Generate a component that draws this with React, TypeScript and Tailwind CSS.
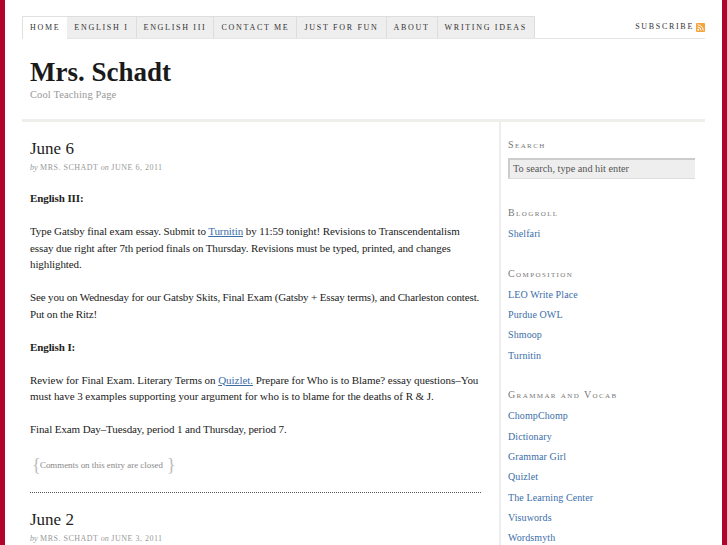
const tabs = ["Home", "English I", "English III", "Contact Me", "Just for Fun", "About", "Writing Ideas"];

function Tabs() {
  return (
    <ul className="flex h-[23px] border-b border-[#e5e5e5]">
      {tabs.map((t, i) => (
        <li
          key={t}
          className={
            i === 0
              ? "h-[23px] border-l border-t border-[#e0e0e0] bg-white px-[7px] pt-[5px] text-[8px] leading-[12px] tracking-[1.7px] text-[#333] uppercase"
              : "h-[22px] border-t border-r border-[#dddddd] bg-[#eeeeee] px-[7px] pt-[5px] text-[8px] leading-[12px] tracking-[1.7px] text-[#333] uppercase"
          }
        >
          {t}
        </li>
      ))}
    </ul>
  );
}

function Meta({ date }: { date: string }) {
  return (
    <p className="mt-[3px] text-[8px] leading-[12px] text-[#999] uppercase tracking-[0.5px]">
      <em className="normal-case tracking-normal">by</em> Mrs. Schadt <em className="normal-case tracking-normal">on</em> {date}
    </p>
  );
}

function Widget({ title, links }: { title: string; links: string[] }) {
  return (
    <div className="mb-[22.5px]">
      <h3 className="text-[10px] leading-[14px] tracking-[1.4px] text-[#777] [font-variant:small-caps]">{title}</h3>
      <ul className="mt-[4px]">
        {links.map((l) => (
          <li key={l} className="text-[10px] leading-[20.3px] tracking-[0.1px] text-[#3b6ea8]">{l}</li>
        ))}
      </ul>
    </div>
  );
}

export default function App() {
  return (
    <div className="h-[545px] overflow-hidden border-x-[5px] border-[#b0042c] bg-white px-[17px] pt-4 font-['Liberation_Serif',serif]">
      <div className="relative">
        <Tabs />
        <div className="absolute right-0 top-[5px] flex items-center gap-[2px] text-[8px] leading-[12px] tracking-[1.7px] text-[#333]">
          SUBSCRIBE
          <svg width="9" height="9" viewBox="0 0 9 9">
            <rect width="9" height="9" rx="1" fill="#f7a33b" />
            <circle cx="2.2" cy="6.8" r="1" fill="#fff" />
            <path d="M1.5 4a3.5 3.5 0 0 1 3.5 3.5M1.5 1.8A5.7 5.7 0 0 1 7.2 7.5" fill="none" stroke="#fff" />
          </svg>
        </div>
      </div>
      <header className="h-[83px] border-b-[3px] border-[#eeeeea] pl-2 pt-[15px]">
        <h1 className="text-[27px] font-bold leading-[36px] text-[#1a1a1a]">Mrs. Schadt</h1>
        <p className="-mt-[2px] text-[10.5px] leading-[14px] tracking-[0.12px] text-[#999]">Cool Teaching Page</p>
      </header>
      <div className="flex">
        <main className="w-[479px] border-r-2 border-[#eeeeee] pl-2 pr-[18px] pt-[17px]">
          <h2 className="text-[17px] leading-[20px] text-[#222]">June 6</h2>
          <Meta date="June 6, 2011" />
          <div className="mt-[16px] text-[11px] leading-[16.5px] tracking-[-0.1px] text-[#222]">
            <p className="font-bold">English III:</p>
            <p className="mt-[16.5px]">
              Type Gatsby final exam essay. Submit to <span className="text-[#3b6ea8] underline">Turnitin</span> by 11:59 tonight! Revisions to Transcendentalism essay due right after 7th period finals on Thursday. Revisions must be typed, printed, and changes highlighted.
            </p>
            <p className="mt-[16.5px] tracking-[-0.15px]">See you on Wednesday for our Gatsby Skits, Final Exam (Gatsby + Essay terms), and Charleston contest. Put on the Ritz!</p>
            <p className="mt-[16.5px] font-bold">English I:</p>
            <p className="mt-[16.5px] tracking-[-0.05px]">
              Review for Final Exam. Literary Terms on <span className="text-[#3b6ea8] underline">Quizlet.</span> Prepare for Who is to Blame? essay questions–You must have 3 examples supporting your argument for who is to blame for the deaths of R &amp; J.
            </p>
            <p className="mt-[16.5px]">Final Exam Day–Tuesday, period 1 and Thursday, period 7.</p>
          </div>
          <p className="mt-[15px] flex items-center pl-[2px] text-[8.9px] leading-[24px] text-[#888]">
            <span className="w-[8px] text-[18px] font-light text-[#bbb]">{"{"}</span>
            Comments on this entry are closed
            <span className="ml-[4px] text-[18px] font-light text-[#bbb]">{"}"}</span>
          </p>
          <div className="mt-[15px] border-t border-dotted border-[#555]" />
          <h2 className="mt-[17px] text-[17px] leading-[20px] text-[#222]">June 2</h2>
          <Meta date="June 3, 2011" />
        </main>
        <aside className="flex-1 pl-[7px] pr-[10px] pt-[16px]">
          <h3 className="text-[10px] leading-[14px] tracking-[1.4px] text-[#777] [font-variant:small-caps]">Search</h3>
          <div className="mb-[27px] mt-[6px] h-[21px] border-l-2 border-t-2 border-b border-l-[#cccccc] border-t-[#cccccc] border-b-[#dddddd] bg-[#eeeeee] pl-[3px] text-[10.25px] leading-[18px] text-[#555]">To search, type and hit enter</div>
          <Widget title="Blogroll" links={["Shelfari"]} />
          <Widget title="Composition" links={["LEO Write Place", "Purdue OWL", "Shmoop", "Turnitin"]} />
          <Widget title="Grammar and Vocab" links={["ChompChomp", "Dictionary", "Grammar Girl", "Quizlet", "The Learning Center", "Visuwords", "Wordsmyth"]} />
        </aside>
      </div>
    </div>
  );
}
